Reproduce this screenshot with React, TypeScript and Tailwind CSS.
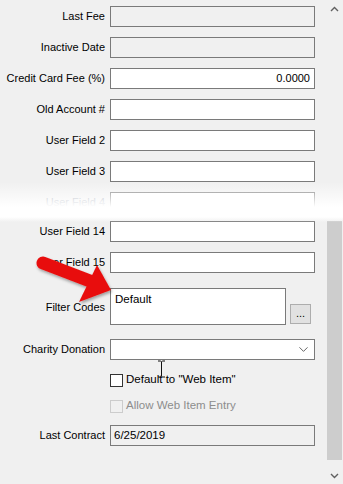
import { ChevronDown } from 'lucide-react';

type Row = {
    label: string;
    top: number;
    value?: string;
    disabled?: boolean;
    align?: 'left' | 'right';
    faded?: boolean;
};

const rows: Row[] = [
    { label: 'Last Fee', top: 6, disabled: true },
    { label: 'Inactive Date', top: 10, disabled: true },
    { label: 'Credit Card Fee (%)', top: 10, value: '0.0000', align: 'right' },
    { label: 'Old Account #', top: 10 },
    { label: 'User Field 2', top: 10 },
    { label: 'User Field 3', top: 10 },
    { label: 'User Field 4', top: 10, faded: true },
    { label: 'User Field 14', top: 8 },
    { label: 'User Field 15', top: 10 },
];

function Field({ label, top, value, disabled, align, faded }: Row) {
    return (
        <div className="flex items-center h-[21px]" style={{ marginTop: top }}>
            <div className={`w-[110px] pr-[5px] text-right ${faded ? 'text-gray-400' : 'text-black'}`}>{label}</div>
            <div
                className={`w-[205px] h-[21px] border border-[#7a7a7a] px-[4px] flex items-center ${
                    disabled ? 'bg-[#f0f0f0]' : 'bg-white'
                } ${align === 'right' ? 'justify-end' : 'justify-start'}`}
            >
                {value}
            </div>
        </div>
    );
}

export default function App() {
    return (
        <div
            className="relative w-[343px] h-[484px] overflow-hidden bg-[#f0f0f0] flex text-[11px] text-black"
            style={{ fontFamily: '"Liberation Sans", Arial, sans-serif' }}
        >
            {/* form column */}
            <div className="w-[326px] flex flex-col">
                {rows.map((r) => (
                    <Field key={r.label} {...r} />
                ))}

                {/* Filter codes */}
                <div className="flex mt-[15px] h-[37px]">
                    <div className="w-[110px] pr-[5px] text-right self-center pt-[2px]">Filter Codes</div>
                    <div className="w-[176px] h-[37px] border border-[#7a7a7a] bg-white px-[4px] pt-[2px] text-[11.5px]">Default</div>
                    <button className="ml-[4px] mt-[16px] w-[21px] h-[20px] border border-[#adadad] bg-[#e1e1e1] text-[11px] leading-none pb-[2px]">
                        ...
                    </button>
                </div>

                {/* Charity donation */}
                <div className="flex items-center mt-[14px] h-[21px]">
                    <div className="w-[110px] pr-[5px] text-right">Charity Donation</div>
                    <div className="w-[205px] h-[21px] border border-[#7a7a7a] bg-white flex items-center justify-end pr-[3px]">
                        <ChevronDown size={15} strokeWidth={1.2} className="text-[#333]" />
                    </div>
                </div>

                {/* checkboxes */}
                <div className="flex items-center mt-[13px] pl-[110px] h-[14px]">
                    <div className="w-[13px] h-[13px] border border-[#333] bg-white" />
                    <span className="ml-[3px] text-[11.5px]">Default to "Web Item"</span>
                </div>
                <div className="flex items-center mt-[12px] pl-[110px] h-[14px] text-[#8d8d8d]">
                    <div className="w-[13px] h-[13px] border border-[#cccccc] bg-[#f0f0f0]" />
                    <span className="ml-[3px] text-[11.5px]">Allow Web Item Entry</span>
                </div>

                {/* Last contract */}
                <div className="flex items-center mt-[12px] h-[21px]">
                    <div className="w-[110px] pr-[5px] text-right">Last Contract</div>
                    <div className="w-[205px] h-[21px] border border-[#7a7a7a] bg-[#f0f0f0] px-[3px] flex items-center text-[11.5px]">
                        6/25/2019
                    </div>
                </div>
            </div>

            {/* scrollbar */}
            <div className="w-[17px] flex flex-col items-center bg-[#f0f0f0]">
                <div className="h-[17px] flex items-center justify-center">
                    <svg width="9" height="6" viewBox="0 0 9 6">
                        <path d="M1 5 L4.5 1.5 L8 5" fill="none" stroke="#606060" strokeWidth="1.4" />
                    </svg>
                </div>
                <div className="flex-1 w-full flex flex-col">
                    <div className="h-[204px]" />
                    <div className="w-[15px] mx-auto h-[239px] bg-[#cdcdcd]" />
                </div>
                <div className="h-[17px] flex items-center justify-center">
                    <svg width="9" height="6" viewBox="0 0 9 6">
                        <path d="M1 1 L4.5 4.5 L8 1" fill="none" stroke="#606060" strokeWidth="1.4" />
                    </svg>
                </div>
            </div>

            {/* torn / cut band */}
            <div className="absolute left-0 right-0 top-[182px] h-[25px] bg-linear-to-b from-[#f0f0f000] to-white" />
            <div className="absolute left-0 right-0 top-[207px] h-[10px] bg-white" />
            <div className="absolute left-0 right-0 top-[217px] h-[5px] bg-linear-to-b from-white to-[#f0f0f000]" />

            {/* red annotation arrow */}
            <svg className="absolute left-0 top-0 pointer-events-none" width="343" height="484">
                <defs>
                    <filter id="sh" x="-20%" y="-20%" width="140%" height="140%">
                        <feDropShadow dx="1" dy="2" stdDeviation="1.5" floodColor="#000" floodOpacity="0.35" />
                    </filter>
                </defs>
                <g filter="url(#sh)">
                    <line x1="43" y1="263" x2="90" y2="281" stroke="#e81010" strokeWidth="13" strokeLinecap="round" />
                    <polygon points="111,290 79,302 97,265" fill="#e81010" />
                </g>
            </svg>

            {/* I-beam cursor */}
            <svg className="absolute left-[157px] top-[360px]" width="9" height="18" viewBox="0 0 9 18">
                <path d="M1 1 H3.5 M5.5 1 H8 M4.5 1.5 V16.5 M1 17 H3.5 M5.5 17 H8 M3.5 1.2 L4.5 2 L5.5 1.2 M3.5 16.8 L4.5 16 L5.5 16.8" stroke="#111" strokeWidth="1" fill="none" />
            </svg>
        </div>
    );
}
